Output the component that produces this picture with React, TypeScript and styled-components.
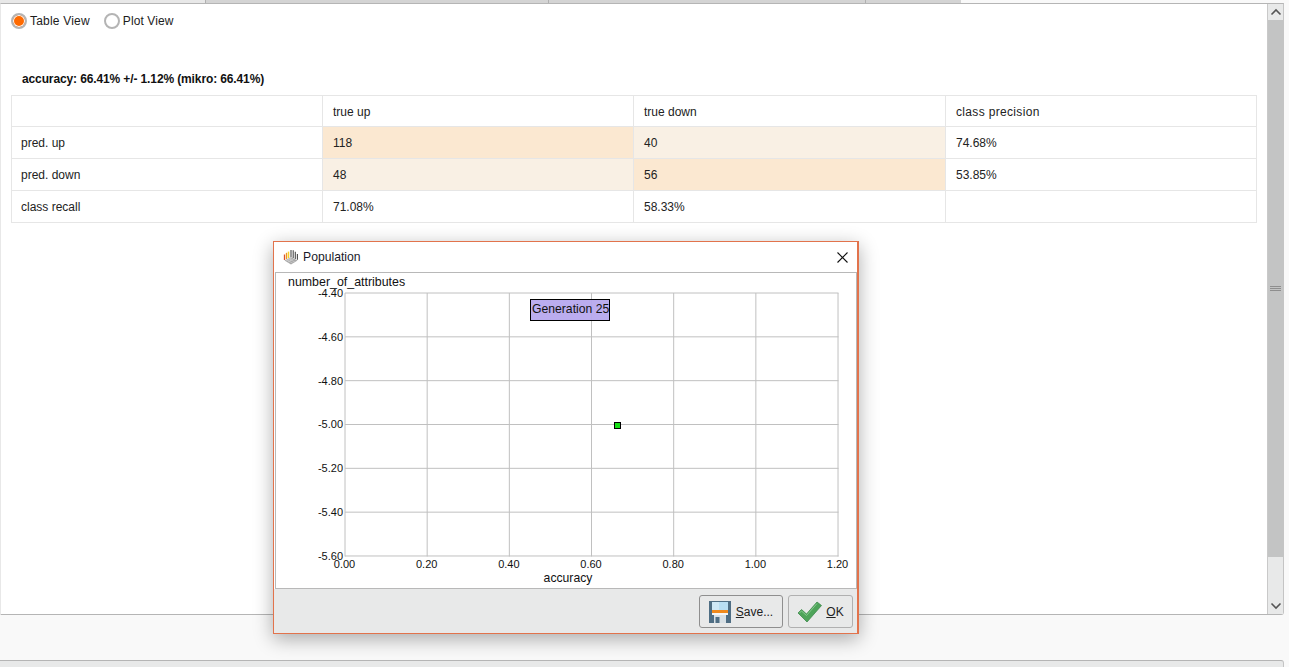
import React from "react";
import styled, { createGlobalStyle } from "styled-components";

const Global = createGlobalStyle`
  html, body { margin: 0; padding: 0; background: #f9f9f9; overflow: hidden; }
  body { font-family: "Liberation Sans", Arial, sans-serif; font-size: 12px; color: #111; }
`;

const Page = styled.div`
  position: relative;
  width: 1289px;
  height: 667px;
  display: flex;
  flex-direction: column;
  overflow: hidden;
`;

const TabStrip = styled.div`
  display: flex;
  height: 3px;
  flex: none;
`;

const Tab = styled.div<{ $w: number; $active?: boolean }>`
  box-sizing: border-box;
  width: ${(p) => p.$w}px;
  height: 3px;
  background: ${(p) => (p.$active ? "#e8e8e8" : "#d4d4d4")};
  border-left: ${(p) => (p.$active ? "0" : "1px solid #b0b0b0")};
`;

const Panel = styled.div`
  box-sizing: border-box;
  width: 1284px;
  height: 612px;
  flex: none;
  display: flex;
  background: #fff;
  border-top: 1px solid #b5b5b5;
  border-bottom: 1px solid #b5b5b5;
  border-right: 1px solid #c4c4c4;
  border-left: 1px solid #e8e8e8;
  border-bottom-right-radius: 3px;
`;

const Content = styled.div`
  flex: 1;
  min-width: 0;
  padding: 8px 10px 0 10px;
`;

const RadioRow = styled.div`
  display: flex;
  align-items: center;
  gap: 14px;
  height: 17px;
`;

const RadioLabel = styled.label<{ $spacing: number }>`
  display: flex;
  align-items: center;
  gap: 3px;
  color: #1c1c1c;
  letter-spacing: ${(p) => p.$spacing}px;
`;

const RadioDot = styled.span<{ $on?: boolean }>`
  box-sizing: border-box;
  width: 16px;
  height: 16px;
  border-radius: 50%;
  border: 2px solid #b4b4b4;
  background: ${(p) => (p.$on ? "#ff6a00" : "#fff")};
  box-shadow: ${(p) => (p.$on ? "inset 0 0 0 1px #fff" : "none")};
`;

const Accuracy = styled.div`
  margin: 43px 0 0 11px;
  height: 14px;
  line-height: 14px;
  font-weight: bold;
  color: #111;
  letter-spacing: -0.12px;
`;

const Matrix = styled.table`
  margin-top: 9px;
  width: 1245px;
  border-collapse: collapse;
  table-layout: fixed;
`;

const Column = styled.col<{ $w: number }>`
  width: ${(p) => p.$w}px;
`;

const Row = styled.tr<{ $h: number }>`
  height: ${(p) => p.$h}px;
`;

const Cell = styled.td<{ $bg?: string; $head?: boolean; $wide?: boolean }>`
  box-sizing: border-box;
  padding: 1px 10px 0;
  padding-left: ${(p) => (p.$head ? 9 : 10)}px;
  border: 1px solid #e6e6e6;
  background: ${(p) => p.$bg || "#fff"};
  color: #222;
  letter-spacing: ${(p) => (p.$wide ? "0.33px" : "0")};
`;

const Scrollbar = styled.div`
  width: 15px;
  flex: none;
  display: flex;
  flex-direction: column;
  background: #e8e9e9;
  border-left: 1px solid #c9c9c9;
`;

const ScrollButton = styled.div<{ $h: number }>`
  height: ${(p) => p.$h}px;
  flex: none;
  display: flex;
  align-items: center;
  justify-content: center;
`;

const Thumb = styled.div`
  height: 537px;
  flex: none;
  background: #c3c4c4;
  display: flex;
  align-items: center;
  justify-content: center;
`;

const Track = styled.div`
  flex: 1;
`;

const Gap = styled.div`
  height: 45px;
  flex: none;
`;

const BottomBar = styled.div`
  box-sizing: border-box;
  width: 1284px;
  flex: 1;
  background: #e8e9e9;
  border-top: 1px solid #b5b5b5;
  border-right: 1px solid #c4c4c4;
  border-top-right-radius: 3px;
`;

const Dialog = styled.div`
  position: absolute;
  left: 273px;
  top: 241px;
  width: 586px;
  height: 393px;
  box-sizing: border-box;
  display: flex;
  flex-direction: column;
  background: #fff;
  border: 1px solid #e2734c;
  border-right-width: 2px;
  box-shadow: 0 5px 18px rgba(0, 0, 0, 0.32);
`;

const TitleBar = styled.div`
  height: 30px;
  flex: none;
  display: flex;
  align-items: center;
  padding: 0 9px 0 9px;
  gap: 4px;
`;

const TitleText = styled.div`
  flex: 1;
  font-size: 12.2px;
  color: #1a1a2a;
`;

const ChartFrame = styled.div`
  flex: none;
  height: 317px;
  box-sizing: border-box;
  margin-left: 1px;
  border: 1px solid #b8b8b8;
  background: #fff;
`;

const ChartSvg = styled.svg`
  display: block;
  width: 583px;
  height: 315px;
  font-family: "Liberation Sans", Arial, sans-serif;
  font-size: 11px;
`;

const AxisTitle = styled.text`
  font-size: 12.4px;
  fill: #111;
`;

const TickLabel = styled.text`
  font-size: 11px;
  fill: #111;
`;

const NoteLabel = styled.text`
  font-size: 12.2px;
  fill: #111;
`;

const Footer = styled.div`
  flex: 1;
  display: flex;
  justify-content: flex-end;
  align-items: flex-start;
  gap: 5px;
  padding: 6px 4px 0 0;
  background: #e8e9e9;
`;

const DialogButton = styled.div<{ $w: number; $dark?: boolean; $gap: number }>`
  box-sizing: border-box;
  width: ${(p) => p.$w}px;
  height: 33px;
  display: flex;
  align-items: center;
  justify-content: center;
  gap: ${(p) => p.$gap}px;
  border: 1px solid ${(p) => (p.$dark ? "#8f8f8f" : "#b0b0b0")};
  border-radius: 3px;
  background: #e8e9e9;
  color: #222;
`;

const Mnemonic = styled.span`
  text-decoration: underline;
`;

const ArrowUp = () => (
  <svg width="12" height="8" viewBox="0 0 12 8"><path d="M1.5 6.5 L6 2 L10.5 6.5" fill="none" stroke="#555" strokeWidth="1.6" /></svg>
);
const ArrowDown = () => (
  <svg width="12" height="8" viewBox="0 0 12 8"><path d="M1.5 1.5 L6 6 L10.5 1.5" fill="none" stroke="#555" strokeWidth="1.6" /></svg>
);
const Grip = () => (
  <svg width="11" height="6" viewBox="0 0 11 6"><path d="M0 .5H11M0 2.5H11M0 4.5H11" stroke="#8e8e8e" strokeWidth="1" /></svg>
);

const CubeIcon = () => (
  <svg width="16" height="16" viewBox="0 0 16 16">
    <path d="M1.5 11.5 L8 15.5 L14.5 11.5 L8 8 Z" fill="#a9a9a9" />
    <path d="M3.5 10.5 L10 14.5 M5.5 9.5 L12 13.2 M5 13 L11 9.5 M3 12 L9 8.5" stroke="#d8d8d8" strokeWidth="0.6" fill="none" />
    <path d="M1.5 11V5.5" stroke="#d9532b" strokeWidth="1.3" fill="none" />
    <path d="M3.5 10V3.8" stroke="#ee9420" strokeWidth="1.3" fill="none" />
    <path d="M5.5 9V2.6" stroke="#f6cf2a" strokeWidth="1.5" fill="none" />
    <path d="M8 8V1M10.2 9V1.2M12.3 10V2.8M14.4 10.8V5" stroke="#4a4a4a" strokeWidth="1.1" fill="none" />
  </svg>
);

const CloseIcon = () => (
  <svg width="11" height="11" viewBox="0 0 11 11"><path d="M.5 .5 L10.5 10.5 M10.5 .5 L.5 10.5" stroke="#111" strokeWidth="1.1" /></svg>
);

const SaveIcon = () => (
  <svg width="22" height="22" viewBox="0 0 22 22">
    <path d="M0 0H22V22H0Z" fill="#4f6e84" />
    <path d="M3 1H19V9H3Z" fill="#b9def2" />
    <path d="M3 1H10V9H3Z" fill="#cfe9f7" />
    <path d="M3 9H19V12H3Z" fill="#f08a1d" />
    <path d="M3 12H19V14H3Z" fill="#f4f6f7" />
    <path d="M5 14H17V22H5Z" fill="#d8e0e5" />
    <path d="M6.5 16H10.5V22H6.5Z" fill="#4f6e84" />
  </svg>
);

const CheckIcon = () => (
  <svg width="25" height="22" viewBox="0 0 25 22">
    <path d="M1 12 L4.5 8.5 L9.5 13 L20 1 L24.5 4.5 L10 21 Z" fill="#4ea45a" stroke="#3f8a4c" strokeWidth="0.8" strokeLinejoin="round" />
    <path d="M2.5 12 L4.5 10 L9.5 14.5 L20 2.5" fill="none" stroke="#84c98c" strokeWidth="1" />
  </svg>
);

const xTicks = ["0.00", "0.20", "0.40", "0.60", "0.80", "1.00", "1.20"];
const yTicks = ["-4.40", "-4.60", "-4.80", "-5.00", "-5.20", "-5.40", "-5.60"];
const x0 = 345;
const xStep = 82.17;
const y0 = 293;
const yStep = 43.83;

const Chart = () => (
  <ChartSvg viewBox="276 273 583 315">
    {xTicks.map((_, i) => (
      <line key={i} x1={x0 + i * xStep} x2={x0 + i * xStep} y1={y0} y2={556.5} stroke="#c0c0c0" />
    ))}
    {yTicks.map((_, i) => (
      <line key={i} x1={x0} x2={838.5} y1={y0 + i * yStep} y2={y0 + i * yStep} stroke="#c0c0c0" />
    ))}
    <AxisTitle x={288} y={286}>number_of_attributes</AxisTitle>
    {yTicks.map((t, i) => (
      <TickLabel key={t} x={343} y={y0 + i * yStep + 4} textAnchor="end">{t}</TickLabel>
    ))}
    {xTicks.map((t, i) => (
      <TickLabel key={t} x={x0 - 0.5 + i * xStep} y={568} textAnchor="middle">{t}</TickLabel>
    ))}
    <NoteLabel x={568} y={582} textAnchor="middle">accuracy</NoteLabel>
    <rect x={530.5} y={299.5} width={79} height={21} fill="#b7a9ee" fillOpacity={0.95} stroke="#000" />
    <NoteLabel x={532} y={313}>Generation 25</NoteLabel>
    <rect x={614.5} y={422.5} width={6} height={6} fill="#16e016" stroke="#000" />
  </ChartSvg>
);

const rows: { label: string; h: number; cells: { v: string; bg?: string; wide?: boolean }[] }[] = [
  { label: "", h: 31, cells: [{ v: "true up" }, { v: "true down" }, { v: "class precision", wide: true }] },
  { label: "pred. up", h: 32, cells: [{ v: "118", bg: "#fbe8d1" }, { v: "40", bg: "#f9f0e4" }, { v: "74.68%" }] },
  { label: "pred. down", h: 32, cells: [{ v: "48", bg: "#f9f0e4" }, { v: "56", bg: "#fbe8d1" }, { v: "53.85%" }] },
  { label: "class recall", h: 32, cells: [{ v: "71.08%" }, { v: "58.33%" }, { v: "" }] },
];

export default function App() {
  return (
    <Page>
      <Global />
      <TabStrip>
        <Tab $w={205} $active />
        <Tab $w={343} />
        <Tab $w={317} />
        <Tab $w={96} />
      </TabStrip>
      <Panel>
        <Content>
          <RadioRow>
            <RadioLabel $spacing={0.2}><RadioDot $on />Table View</RadioLabel>
            <RadioLabel $spacing={0.1}><RadioDot />Plot View</RadioLabel>
          </RadioRow>
          <Accuracy>accuracy: 66.41% +/- 1.12% (mikro: 66.41%)</Accuracy>
          <Matrix>
            <colgroup>
              <Column $w={311} />
              <Column $w={311} />
              <Column $w={312} />
              <Column $w={311} />
            </colgroup>
            <tbody>
              {rows.map((r) => (
                <Row key={r.label} $h={r.h}>
                  <Cell $head>{r.label}</Cell>
                  {r.cells.map((c, i) => (
                    <Cell key={i} $bg={c.bg} $wide={c.wide}>{c.v}</Cell>
                  ))}
                </Row>
              ))}
            </tbody>
          </Matrix>
        </Content>
        <Scrollbar>
          <ScrollButton $h={16}><ArrowUp /></ScrollButton>
          <Thumb><Grip /></Thumb>
          <Track />
          <ScrollButton $h={16}><ArrowDown /></ScrollButton>
        </Scrollbar>
      </Panel>
      <Gap />
      <BottomBar />
      <Dialog>
        <TitleBar>
          <CubeIcon />
          <TitleText>Population</TitleText>
          <CloseIcon />
        </TitleBar>
        <ChartFrame><Chart /></ChartFrame>
        <Footer>
          <DialogButton $w={84} $dark $gap={5}><SaveIcon /><span><Mnemonic>S</Mnemonic>ave...</span></DialogButton>
          <DialogButton $w={65} $gap={4}><CheckIcon /><span><Mnemonic>O</Mnemonic>K</span></DialogButton>
        </Footer>
      </Dialog>
    </Page>
  );
}
